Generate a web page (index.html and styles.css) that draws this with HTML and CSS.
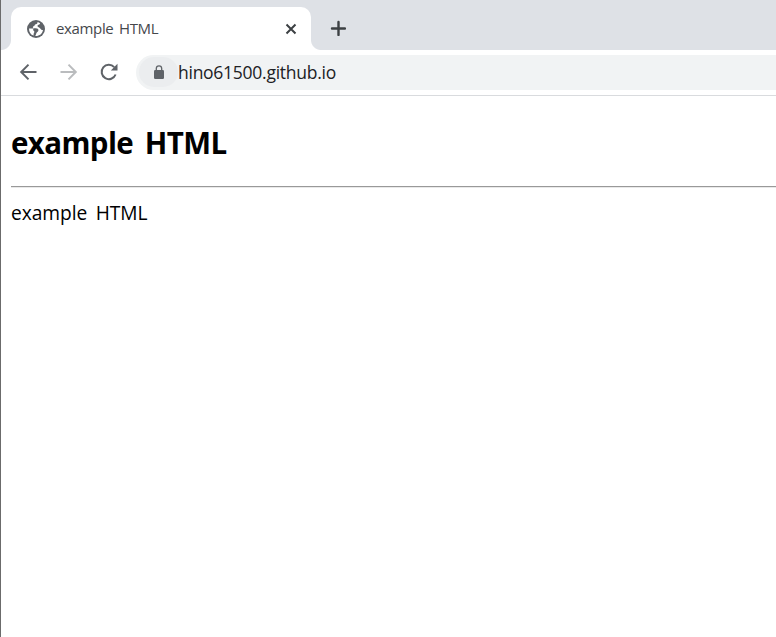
FILE: index.html
```html
<!DOCTYPE html>
<html lang="en">
<head>
<meta charset="utf-8">
<title>example HTML</title>
<link rel="stylesheet" href="styles.css">
</head>
<body>
<div class="window">
  <div class="tabstrip">
    <div class="tab">
      <svg class="globe" viewBox="0 0 18 18"><circle cx="9" cy="9" r="9" fill="#5f6368"/><path d="M10.4 2.1C10.8 3.4 10 4.2 8.7 4.3C7.7 4.4 7.9 5.5 7.1 5.9C6.1 6.3 5.6 7 6 7.8C6.5 8.4 7.4 8.2 8.8 8.3C10.6 8.4 11.4 9 11.4 10.2C11.4 11.4 10.6 11.8 9.8 12.4C9 13.1 9.3 14.7 8.2 16C12.2 16.3 15.4 13.9 16 10C15 10.4 14.2 9.6 13.5 8.8C12.8 8 12.2 7.4 11.2 7C10.3 6.6 10.3 5.6 11 5.1C11.8 4.6 12.9 4.4 13.1 3.3C12.3 2.7 11.4 2.3 10.4 2.1ZM2 8.4H7L5.8 10.1C6.6 10.7 7.4 11 7.3 12C7.2 13 6.4 13.2 6.6 15.6C3.7 14.6 1.9 11.8 2 8.4Z" fill="#fff"/></svg>
      <span class="tab-title">example HTML</span>
      <svg class="close" viewBox="0 0 12 12"><path d="M1.5 1.5l9 9M10.5 1.5l-9 9" stroke="#3c4043" stroke-width="2"/></svg>
    </div>
    <svg class="plus" viewBox="0 0 16 16"><path d="M8.5 2v13M2 8.5h13" stroke="#3c4043" stroke-width="2.4" stroke-linecap="round"/></svg>
  </div>
  <div class="toolbar">
    <svg class="nav" viewBox="0 0 18 18"><path d="M17.5 9H2.5M9.5 1.6L2.2 9L9.5 16.4" fill="none" stroke="#5f6368" stroke-width="2"/></svg>
    <svg class="nav forward" viewBox="0 0 18 18"><path d="M.5 9h15M8.5 1.6L15.8 9L8.5 16.4" fill="none" stroke="#babcbe" stroke-width="2"/></svg>
    <svg class="nav reload" viewBox="0 0 18 18"><path d="M15.6 11.5A7.2 7.2 0 1 1 14.2 4.1" fill="none" stroke="#5f6368" stroke-width="2"/><path d="M17.5 .8V7.5H10.8Z" fill="#5f6368"/></svg>
    <div class="omnibox">
      <span class="site-info"><svg class="lock" viewBox="0 0 10 14"><path d="M2.3 6V3.6a2.7 2.7 0 0 1 5.4 0V6" fill="none" stroke="#5f6368" stroke-width="1.3"/><rect y="5" width="10" height="9" rx="1.2" fill="#5f6368"/></svg></span>
      <span class="url">hino61500.github.io</span>
    </div>
  </div>
  <main class="page">
    <h1>example HTML</h1>
    <hr>
    <p>example HTML</p>
  </main>
</div>
</body>
</html>
```
FILE: styles.css
```css
* { box-sizing: border-box; }
body { margin: 0; overflow: hidden; background: #fff; font-family: "Open Sans", "Noto Sans", sans-serif; }
svg { display: block; flex: none; }
.window { height: 637px; border-left: 1px solid #6b6b6b; }
.tabstrip { display: flex; height: 50px; padding: 7px 0 0 10px; background: #dee1e6; }
.tab { position: relative; display: flex; align-items: center; width: 300px; height: 43px; padding: 0 14px 0 16px; background: #fff; border-radius: 10px 10px 0 0; }
.tab::before, .tab::after { content: ""; position: absolute; bottom: 0; width: 10px; height: 10px; }
.tab::before { left: -10px; background: radial-gradient(circle at 0 0, transparent 9.5px, #fff 10.5px); }
.tab::after { right: -10px; background: radial-gradient(circle at 100% 0, transparent 9.5px, #fff 10.5px); }
.globe { width: 18px; height: 18px; }
.tab-title { margin-left: 11px; padding-bottom: 2px; font-size: 15px; line-height: 20px; letter-spacing: -0.35px; word-spacing: 2px; color: #45484c; white-space: nowrap; }
.close { width: 12px; height: 12px; margin-left: auto; }
.plus { width: 16px; height: 16px; margin: 13px 0 0 19px; }
.toolbar { display: flex; align-items: center; height: 46px; padding: 0 0 1px 18px; border-bottom: 1px solid #d9dbde; }
.nav { width: 18px; height: 18px; }
.forward { margin-left: 23px; }
.reload { margin-left: 22px; }
.omnibox { display: flex; align-items: center; flex: 1; height: 35px; margin-left: 18px; padding-left: 3px; background: #f1f3f4; border-radius: 18px 0 0 18px; }
.site-info { display: flex; align-items: center; justify-content: center; width: 39px; height: 30px; border-radius: 15px; background: #ebedef; }
.lock { width: 10px; height: 14px; }
.url { font-size: 17.5px; line-height: 24px; letter-spacing: -0.26px; color: #202124; white-space: nowrap; }
.page { padding: 25px 0 0 10px; color: #000; }
h1 { margin: 0; font-size: 29.5px; line-height: 44px; font-weight: 700; letter-spacing: -0.6px; word-spacing: 4.5px; white-space: nowrap; }
hr { margin: 21px 0 0; height: 2px; border: 0; border-top: 1px solid #999; border-bottom: 1px solid #e9e9e9; }
p { margin: 11px 0 0; font-size: 19.2px; line-height: 28px; letter-spacing: -0.05px; word-spacing: 3.5px; white-space: nowrap; }
```
